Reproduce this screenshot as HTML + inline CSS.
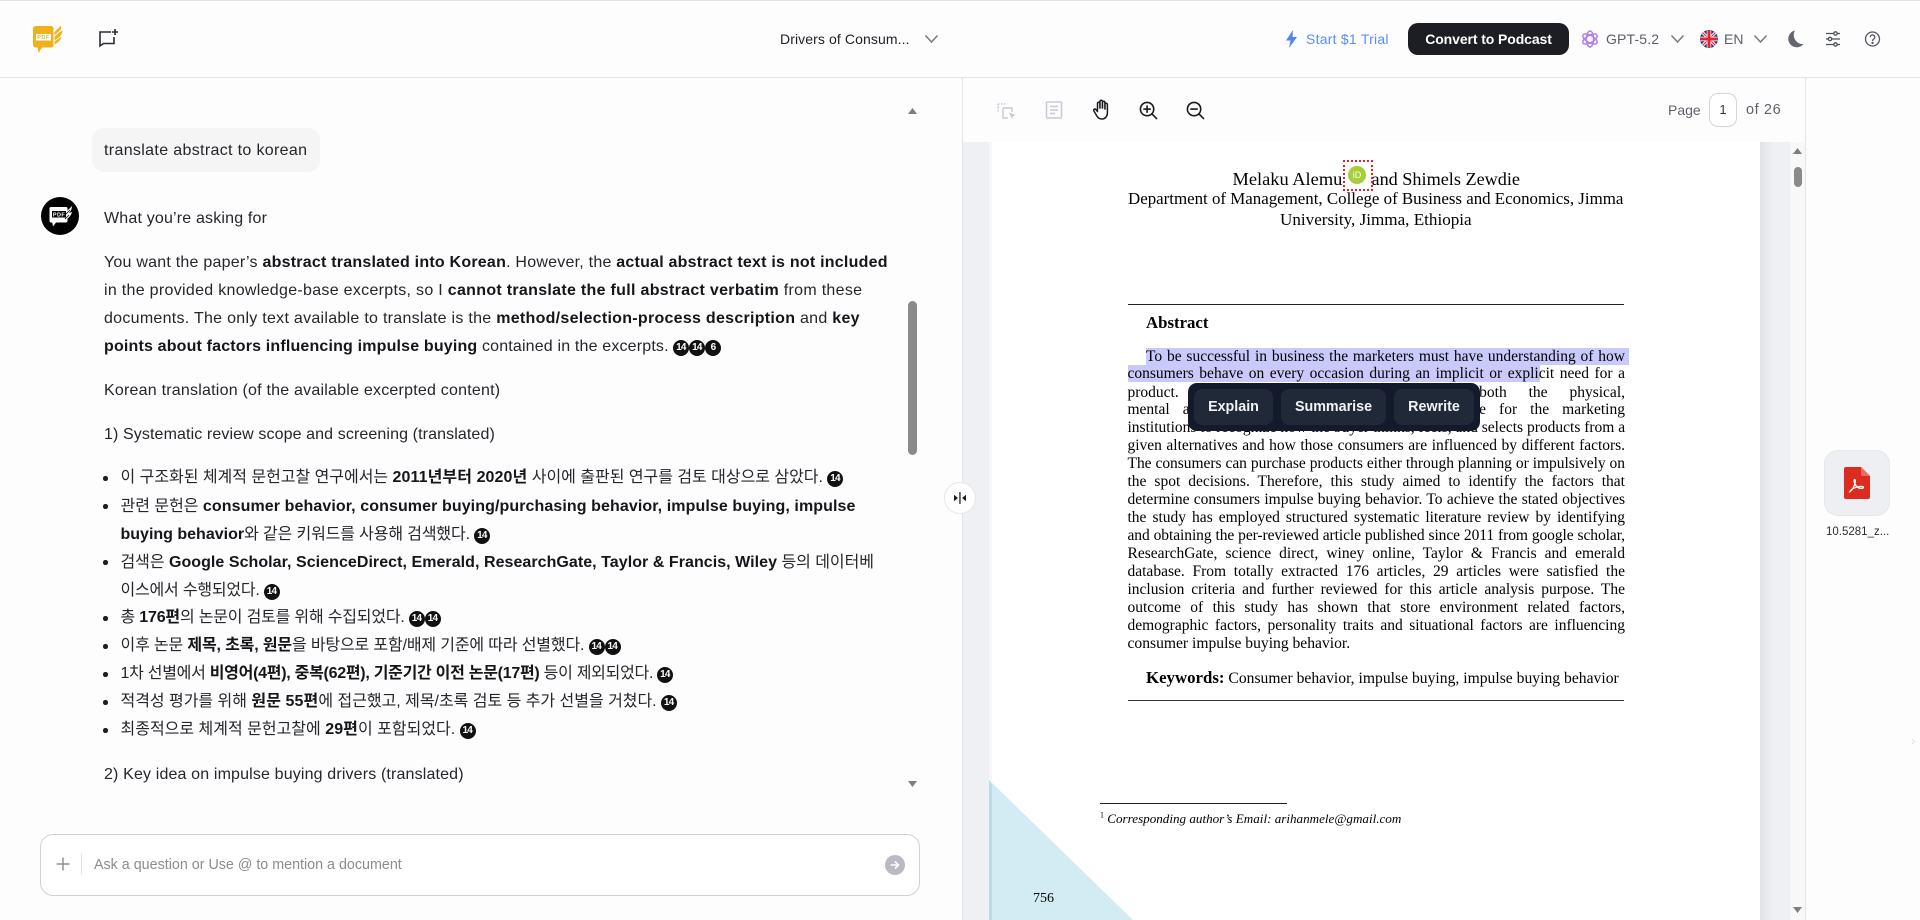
<!DOCTYPE html>
<html lang="en"><head><meta charset="utf-8"><title>Drivers of Consumer</title>
<style>
html,body{margin:0;padding:0}
body{width:1920px;height:920px;position:relative;overflow:hidden;background:#fdfdfe;font-family:"Liberation Sans","Noto Sans CJK KR",sans-serif;color:#1d1f24}
.a{position:absolute;white-space:nowrap}
.c{position:absolute;left:104px;margin-top:1px;white-space:nowrap;font-size:16px;letter-spacing:.22px;line-height:28px;height:28px;color:#24262b}
.c b{color:#14161a;font-weight:700}
.li{left:120.5px;letter-spacing:0}
.li b{letter-spacing:.09px}
.d{position:absolute;left:103px;margin-top:1px;width:4.5px;height:4.5px;border-radius:50%;background:#1d1f24}
.n{display:inline-block;width:16px;height:16px;border-radius:50%;background:#111;color:#fff;font-size:10px;font-weight:700;line-height:16px;text-align:center;vertical-align:1px;letter-spacing:-.8px;text-indent:-.8px}
.p{position:absolute;left:1127.5px;width:497.5px;font-family:"Liberation Serif",serif;font-size:15.5px;line-height:18px;height:18px;color:#000;text-align:justify;text-align-last:justify;white-space:nowrap}
.t{position:absolute;font-family:"Liberation Serif",serif;color:#000;white-space:nowrap}
.btn{position:absolute;top:389px;height:36px;background:#1f2937;border-radius:8px;color:#f1f3f6;font-size:14.3px;font-weight:700;line-height:36px;text-align:center}
svg{position:absolute;display:block}
</style></head><body>

<div class="a" style="left:0;top:0;width:1920px;height:1px;background:#e4e4e4"></div>
<div class="a" style="left:0;top:77px;width:1920px;height:1px;background:#e4e4e6"></div>
<div class="a" style="left:962px;top:78px;width:1px;height:842px;background:#e4e4e6"></div>
<div class="a" style="left:1805px;top:78px;width:1px;height:842px;background:#e4e4e6"></div>

<!-- Logo -->
<svg style="left:30px;top:23px" width="36" height="32" viewBox="0 0 36 32">
<path d="M6 3h15q2.500 0 2.500 2.500V22q0 2.500-2.500 2.500H12L8.500 30l-.8-5.500H6Q3 24.500 3 21.500V6q0-3 3-3z" fill="#efb11d"/>
<path d="M24.500 9 31 2.500q.5 4-2.500 7l4-2q0 4.500-4.500 7.500l3.500-1q-1.500 4.500-5.500 6.500l-1.500 1z" fill="#efb11d"/>
<path d="M24.500 13 30 8M24.500 18 30 14" stroke="#fdfdfe" stroke-width=".9"/>
<rect x="6" y="11" width="15" height="6.500" fill="#fff"/>
<text x="13.500" y="16.200" font-size="5.500" font-weight="700" text-anchor="middle" fill="#efb11d" font-family="Liberation Sans" letter-spacing=".5">PDF</text>
</svg>
<!-- New chat -->
<svg style="left:98px;top:28px" width="22" height="22" viewBox="0 0 22 22" fill="none" stroke="#2b2d33" stroke-width="1.600">
<path d="M13 4H2v14l3.500-2.500H16V9"/><path d="M17 1v6M14 4h6"/>
</svg>

<div class="a" style="left:780px;top:29px;font-size:14px;line-height:20px;color:#1d1f24;letter-spacing:.1px">Drivers of Consum...</div>
<svg style="left:924px;top:33px" width="15" height="12" viewBox="0 0 15 12" fill="none" stroke="#777a82" stroke-width="1.500"><path d="M1.500 2.500 7.500 9l6-6.500"/></svg>

<svg style="left:1285px;top:30px" width="13" height="18" viewBox="0 0 13 18"><path d="M8 0 1 10.500h4.500L4 18l8-11H7.500z" fill="#4f86f7"/></svg>
<div class="a" style="left:1306px;top:29px;font-size:14px;line-height:20px;color:#5a8df7;letter-spacing:.24px">Start $1 Trial</div>
<div class="a" style="left:1408px;top:23px;width:161px;height:32px;border-radius:10px;background:#1d1e23;color:#fff;font-size:14px;font-weight:700;line-height:32px;text-align:center;letter-spacing:-.1px">Convert to Podcast</div>

<svg style="left:1581px;top:30px" width="18" height="18" viewBox="0 0 18 18" fill="none" stroke="#b47ff0" stroke-width="1.500">
<ellipse cx="9" cy="9" rx="3.600" ry="8"/><ellipse cx="9" cy="9" rx="3.600" ry="8" transform="rotate(60 9 9)"/><ellipse cx="9" cy="9" rx="3.600" ry="8" transform="rotate(120 9 9)"/>
</svg>
<div class="a" style="left:1606px;top:29px;font-size:14px;line-height:20px;color:#5b5e66;letter-spacing:.15px">GPT-5.2</div>
<svg style="left:1670px;top:33px" width="15" height="12" viewBox="0 0 15 12" fill="none" stroke="#777a82" stroke-width="1.500"><path d="M1.500 2.500 7.500 9l6-6.500"/></svg>

<svg style="left:1700px;top:30px" width="18" height="18" viewBox="0 0 18 18">
<defs><clipPath id="fc"><circle cx="9" cy="9" r="9"/></clipPath></defs>
<g clip-path="url(#fc)"><rect width="18" height="18" fill="#24408f"/>
<path d="M0 0 18 18M18 0 0 18" stroke="#fff" stroke-width="3"/><path d="M0 0 18 18M18 0 0 18" stroke="#e0252f" stroke-width="1.100"/>
<path d="M9 0v18M0 9h18" stroke="#fff" stroke-width="4.400"/><path d="M9 0v18M0 9h18" stroke="#e0252f" stroke-width="3"/></g>
</svg>
<div class="a" style="left:1724px;top:29px;font-size:14px;line-height:20px;color:#5b5e66">EN</div>
<svg style="left:1753px;top:33px" width="15" height="12" viewBox="0 0 15 12" fill="none" stroke="#777a82" stroke-width="1.500"><path d="M1.500 2.500 7.500 9l6-6.500"/></svg>

<svg style="left:1787px;top:30px" width="17" height="18" viewBox="0 0 17 18"><path d="M8 .5A8.500 8.500 0 1 0 16.500 14 9 9 0 0 1 8 .5z" fill="#63666e"/></svg>
<svg style="left:1825px;top:30px" width="16" height="18" viewBox="0 0 16 18" fill="none" stroke="#4e5158" stroke-width="1.300">
<path d="M1 3.500h14M1 9h14M1 14.500h14"/><circle cx="10.500" cy="3.500" r="1.700" fill="#fdfdfe"/><circle cx="5" cy="9" r="1.700" fill="#fdfdfe"/><circle cx="10.500" cy="14.500" r="1.700" fill="#fdfdfe"/>
</svg>
<svg style="left:1864px;top:30px" width="17" height="18" viewBox="0 0 17 18" fill="none" stroke="#55585f" stroke-width="1.300">
<circle cx="8.500" cy="9" r="7"/><path d="M6.200 7.200a2.300 2.300 0 1 1 3.500 2c-.9.500-1.200 1-1.200 1.900"/><circle cx="8.500" cy="13" r=".5" fill="#55585f"/>
</svg>

<!-- Chat -->
<svg style="left:908px;top:107px" width="10" height="8"><path d="M0 7 4.500 1 9 7z" fill="#7d7d7d"/></svg>
<svg style="left:908px;top:780px" width="10" height="8"><path d="M0 1 4.500 7 9 1z" fill="#7d7d7d"/></svg>
<div class="a" style="left:908px;top:301px;width:9px;height:154px;border-radius:5px;background:#8a8a8a"></div>

<div class="a" style="left:92px;top:128px;width:228px;height:44px;border-radius:12px;background:#f5f5f5"></div>
<div class="c" style="top:136px;letter-spacing:.34px">translate abstract to korean</div>

<svg style="left:41px;top:197px" width="38" height="38" viewBox="0 0 38 38">
<circle cx="19" cy="19" r="19" fill="#000"/>
<path d="M10 10h15q1.500 0 1.500 1.500V24q0 1.500-1.500 1.500H15l-3 4-.8-4H10q-1.500 0-1.500-1.500V11.500Q8.500 10 10 10z" fill="#fff"/>
<path d="M26 14 31 9q0 4-3 7l3-1q-1 4-4 6l-5 4z" fill="#fff"/>
<path d="M24 18 29 13M24 22 28 18" stroke="#000" stroke-width=".8"/>
<rect x="11" y="14" width="14" height="6.500" fill="#000"/>
<text x="18" y="19.300" font-size="5.500" font-weight="700" text-anchor="middle" fill="#fff" font-family="Liberation Sans" letter-spacing=".4">PDF</text>
</svg>

<div class="c" style="top:204px;letter-spacing:.18px">What you’re asking for</div>
<div class="c" style="top:248px;letter-spacing:.23px">You want the paper’s <b>abstract translated into Korean</b>. However, the <b>actual abstract text is not included</b></div>
<div class="c" style="top:276px;letter-spacing:.3px">in the provided knowledge-base excerpts, so I <b>cannot translate the full abstract verbatim</b> from these</div>
<div class="c" style="top:304px;letter-spacing:.28px">documents. The only text available to translate is the <b>method/selection-process description</b> and <b>key</b></div>
<div class="c" style="top:332px;letter-spacing:.17px"><b>points about factors influencing impulse buying</b> contained in the excerpts. <span class="n">14</span><span class="n">14</span><span class="n">6</span></div>
<div class="c" style="top:376px">Korean translation (of the available excerpted content)</div>
<div class="c" style="top:420px;letter-spacing:.11px">1) Systematic review scope and screening (translated)</div>

<div class="d" style="top:475px"></div>
<div class="c li" style="top:463px;letter-spacing:-.02px">이 구조화된 체계적 문헌고찰 연구에서는 <b>2011년부터 2020년</b> 사이에 출판된 연구를 검토 대상으로 삼았다. <span class="n">14</span></div>
<div class="d" style="top:503px"></div>
<div class="c li" style="top:491.500px;letter-spacing:-.01px">관련 문헌은 <b>consumer behavior, consumer buying/purchasing behavior, impulse buying, impulse</b></div>
<div class="c li" style="top:519.500px;letter-spacing:-.13px"><b style="letter-spacing:0">buying behavior</b>와 같은 키워드를 사용해 검색했다. <span class="n">14</span></div>
<div class="d" style="top:559px"></div>
<div class="c li" style="top:547.500px;letter-spacing:-.04px">검색은 <b style="letter-spacing:.05px">Google Scholar, ScienceDirect, Emerald, ResearchGate, Taylor &amp; Francis, Wiley</b> 등의 데이터베</div>
<div class="c li" style="top:575.500px;letter-spacing:-.2px">이스에서 수행되었다. <span class="n">14</span></div>
<div class="d" style="top:615px"></div>
<div class="c li" style="top:603px;letter-spacing:-.19px">총 <b style="letter-spacing:-.19px">176편</b>의 논문이 검토를 위해 수집되었다. <span class="n">14</span><span class="n">14</span></div>
<div class="d" style="top:643px"></div>
<div class="c li" style="top:631px;letter-spacing:-.15px">이후 논문 <b style="letter-spacing:-.15px">제목, 초록, 원문</b>을 바탕으로 포함/배제 기준에 따라 선별했다. <span class="n">14</span><span class="n">14</span></div>
<div class="d" style="top:671px"></div>
<div class="c li" style="top:659px;letter-spacing:-.27px">1차 선별에서 <b style="letter-spacing:-.27px">비영어(4편), 중복(62편), 기준기간 이전 논문(17편)</b> 등이 제외되었다. <span class="n">14</span></div>
<div class="d" style="top:699px"></div>
<div class="c li" style="top:687px;letter-spacing:-.02px">적격성 평가를 위해 <b>원문 55편</b>에 접근했고, 제목/초록 검토 등 추가 선별을 거쳤다. <span class="n">14</span></div>
<div class="d" style="top:727px"></div>
<div class="c li" style="top:715px">최종적으로 체계적 문헌고찰에 <b>29편</b>이 포함되었다. <span class="n">14</span></div>
<div class="c" style="top:759.500px;letter-spacing:.15px">2) Key idea on impulse buying drivers (translated)</div>

<!-- Input -->
<div class="a" style="left:40px;top:834px;width:878px;height:60px;border:1px solid #cfd1d6;border-radius:13px;background:#fff"></div>
<svg style="left:56px;top:857px" width="14" height="14"><path d="M7 .5v13M.5 7h13" stroke="#8e9096" stroke-width="1.500"/></svg>
<div class="a" style="left:81px;top:854px;width:1px;height:20px;background:#e2e3e6"></div>
<div class="a" style="left:94px;top:855px;font-size:14.300px;line-height:20px;color:#8a8c92">Ask a question or Use @ to mention a document</div>
<svg style="left:885px;top:855px" width="20" height="20" viewBox="0 0 20 20"><circle cx="10" cy="10" r="10" fill="#b9bac3"/><path d="M5.500 10h8M10 6.500l3.500 3.500-3.500 3.500" fill="none" stroke="#fff" stroke-width="1.600"/></svg>

<!-- PDF toolbar -->
<svg style="left:997px;top:101px" width="20" height="20" viewBox="0 0 20 20" fill="none" stroke="#c8cad3" stroke-width="1.400">
<path d="M1 3h9M1 3v9M1 6h1" stroke-dasharray="1.500 1.500"/><path d="M6 7h9v4M6 7v10h5"/><path d="M12 11.500 18.500 14l-2.500 1.200L15 18z" fill="#c8cad3" stroke="none"/>
</svg>
<svg style="left:1045px;top:100px" width="18" height="20" viewBox="0 0 18 20" fill="none" stroke="#c8cad3" stroke-width="1.500">
<rect x="1.500" y="2" width="15" height="16" rx="1"/><path d="M5 6.500h8M5 10h8M5 13.500h5"/>
</svg>
<svg style="left:1092px;top:99px" width="20" height="21" viewBox="0 0 20 21" fill="none" stroke="#1a1b1f" stroke-width="1.500" stroke-linecap="round" stroke-linejoin="round">
<path d="M5.500 11V4.500a1.200 1.200 0 0 1 2.400 0V9M8 9V2.500a1.200 1.200 0 0 1 2.400 0V9M10.500 9V3.500a1.200 1.200 0 0 1 2.400 0V10M13 10V5.500a1.200 1.200 0 0 1 2.400 0V14c0 3.500-2.500 6-5.500 6-2.500 0-3.800-1-5-3l-3-5c-.8-1.500 1-2.500 2-1.500l1.600 2"/>
</svg>
<svg style="left:1139px;top:101px" width="19" height="19" viewBox="0 0 20 20" fill="none" stroke="#1a1b1f" stroke-width="1.700" stroke-linecap="round">
<circle cx="8.500" cy="8.500" r="7"/><path d="M13.800 13.800 18.500 18.500M8.500 5.200v6.600M5.200 8.500h6.600"/>
</svg>
<svg style="left:1186px;top:101px" width="19" height="19" viewBox="0 0 20 20" fill="none" stroke="#1a1b1f" stroke-width="1.700" stroke-linecap="round">
<circle cx="8.500" cy="8.500" r="7"/><path d="M13.800 13.800 18.500 18.500M5.200 8.500h6.600"/>
</svg>
<div class="a" style="left:1668px;top:100px;font-size:14px;line-height:20px;color:#5f6269">Page</div>
<div class="a" style="left:1709px;top:93px;width:26px;height:32px;border:1px solid #d4d5da;border-radius:9px;background:#fff;text-align:center;font-size:13px;line-height:32px;color:#33353a">1</div>
<div class="a" style="left:1746px;top:100px;font-size:14.500px;line-height:20px;color:#5f6269;letter-spacing:.6px">of 26</div>

<!-- PDF area -->
<div class="a" style="left:963px;top:142px;width:842px;height:778px;background:#eef0f4"></div>
<div class="a" style="left:1760px;top:142px;width:14px;height:778px;background:linear-gradient(90deg,#e2e3e7,#eef0f4)"></div>
<div class="a" style="left:989px;top:142px;width:4px;height:778px;background:#f6f7f9"></div>
<div class="a" style="left:992px;top:142px;width:768px;height:778px;background:#fff"></div>
<div class="a" style="left:1790px;top:142px;width:15px;height:778px;background:#f8f8f9"></div>
<svg style="left:1793px;top:147px" width="10" height="8"><path d="M0 7 4.500 1 9 7z" fill="#7d7d7d"/></svg>
<svg style="left:1793px;top:906px" width="10" height="8"><path d="M0 1 4.500 7 9 1z" fill="#7d7d7d"/></svg>
<div class="a" style="left:1794px;top:167px;width:8px;height:20px;border-radius:4px;background:#8a8a8a"></div>

<svg style="left:989px;top:780px" width="146" height="140"><path d="M0 0 144 140H0z" fill="#d3ebf3"/><path d="M0 0v140h3V5z" fill="#bcdbe6"/></svg>

<div class="t" style="left:1232.500px;top:169px;font-size:18.400px;line-height:20px">Melaku Alemu</div>
<div class="t" style="left:1371.500px;top:169px;font-size:18.200px;line-height:20px">and Shimels Zewdie</div>
<div class="t" style="left:1128px;top:189px;font-size:16.900px;line-height:20px">Department of Management, College of Business and Economics, Jimma</div>
<div class="t" style="left:1280px;top:210px;font-size:17.100px;line-height:20px">University, Jimma, Ethiopia</div>
<div class="a" style="left:1343px;top:160px;width:26px;height:27px;border:2px dotted #e01f26"></div>
<div class="a" style="left:1348px;top:166px;width:18px;height:18px;border-radius:50%;background:#a6ce39;color:#fff;font-size:9px;line-height:18px;text-align:center">iD</div>

<div class="a" style="left:1127.500px;top:303.500px;width:496px;height:1px;background:#222"></div>
<div class="t" style="left:1146px;top:313px;font-size:16.800px;line-height:20px;font-weight:700">Abstract</div>

<div class="a" style="left:1146px;top:348px;width:483px;height:17px;background:#c9c9fb"></div>
<div class="a" style="left:1127.500px;top:365px;width:412.500px;height:17px;background:#c9c9fb"></div>

<div class="p" style="top:348px;left:1146px;width:479px">To be successful in business the marketers must have understanding of how</div>
<div class="p" style="top:365px">consumers behave on every occasion during an implicit or explicit need for a</div>
<div class="p" style="top:384px">product. The consumer behavior involves both the physical,</div>
<div class="p" style="top:401px">mental and emotional processes of buying, while for the marketing</div>
<div class="p" style="top:419px">institutions to recognize how the buyer thinks, feels, and selects products from a</div>
<div class="p" style="top:437px;letter-spacing:-.02px">given alternatives and how those consumers are influenced by different factors.</div>
<div class="p" style="top:455px;letter-spacing:-.03px">The consumers can purchase products either through planning or impulsively on</div>
<div class="p" style="top:473px">the spot decisions. Therefore, this study aimed to identify the factors that</div>
<div class="p" style="top:491px">determine consumers impulse buying behavior. To achieve the stated objectives</div>
<div class="p" style="top:509px">the study has employed structured systematic literature review by identifying</div>
<div class="p" style="top:527px;letter-spacing:-.07px">and obtaining the per-reviewed article published since 2011 from google scholar,</div>
<div class="p" style="top:545px">ResearchGate, science direct, winey online, Taylor &amp; Francis and emerald</div>
<div class="p" style="top:563px">database. From totally extracted 176 articles, 29 articles were satisfied the</div>
<div class="p" style="top:581px">inclusion criteria and further reviewed for this article analysis purpose. The</div>
<div class="p" style="top:599px">outcome of this study has shown that store environment related factors,</div>
<div class="p" style="top:617px">demographic factors, personality traits and situational factors are influencing</div>
<div class="t" style="left:1127.500px;top:635px;font-size:15.600px;line-height:18px">consumer impulse buying behavior.</div>
<div class="t" style="left:1146px;top:668px;font-size:15.600px;line-height:20px;letter-spacing:.02px"><b style="font-size:16.800px">Keywords:</b> Consumer behavior, impulse buying, impulse buying behavior</div>
<div class="a" style="left:1127.500px;top:699.500px;width:496px;height:1px;background:#333"></div>

<div class="a" style="left:1099.500px;top:802.500px;width:187px;height:1px;background:#222"></div>
<div class="t" style="left:1100px;top:811px;font-size:13.100px;line-height:16px;font-style:italic"><sup style="font-size:8px;line-height:0;font-style:normal">1</sup> Corresponding author’s Email: arihanmele@gmail.com</div>
<div class="t" style="left:1033px;top:891px;font-size:14px;line-height:16px">756</div>

<!-- Popup -->
<div class="a" style="left:1188px;top:383px;width:292px;height:48px;border-radius:9px;background:#121a2b"></div>
<div class="btn" style="left:1194px;width:79px">Explain</div>
<div class="btn" style="left:1281px;width:105px">Summarise</div>
<div class="btn" style="left:1394px;width:80px">Rewrite</div>

<!-- Sidebar -->
<div class="a" style="left:1824px;top:450px;width:66px;height:66px;border-radius:14px;background:#eeeff3;box-shadow:inset 0 0 0 1px #e6e7eb"></div>
<svg style="left:1844px;top:467px" width="26" height="32" viewBox="0 0 26 32">
<path d="M2 0h15l9 9v21q0 2-2 2H2q-2 0-2-2V2q0-2 2-2z" fill="#dd2c1f"/>
<path d="M17 0l9 9h-7q-2 0-2-2z" fill="#ec6a60"/>
<path d="M6 24.500c2-1 4.500-5.500 5.200-9 .4-2 .1-3-.5-3-.8 0-.8 2 .2 4.200 1.200 2.600 3.200 4.300 5 4.600 2.600.4 4-.5 3.500-1.300-.6-.9-4-.7-7.200.3-2.800.9-5.400 2.500-6.200 4.200z" fill="none" stroke="#fff" stroke-width="1.300"/>
</svg>
<div class="a" style="left:1826px;top:525px;font-size:11.500px;line-height:15px;color:#2c2e33">10.5281_z...</div>
<div class="a" style="left:1911px;top:733px;font-size:13px;line-height:16px;color:#dcdcdf">›</div>

<!-- Handle -->
<div class="a" style="left:944px;top:482px;width:30px;height:30px;border:1px solid #e6e7ea;border-radius:50%;background:#fff"></div>
<svg style="left:951px;top:491px" width="18" height="14" viewBox="0 0 18 14" fill="#1d1f24"><rect x="8.300" y="1" width="1.300" height="12"/><path d="M7 7 3 3.800v6.400zM11 7l4-3.200v6.400z"/></svg>

</body></html>
